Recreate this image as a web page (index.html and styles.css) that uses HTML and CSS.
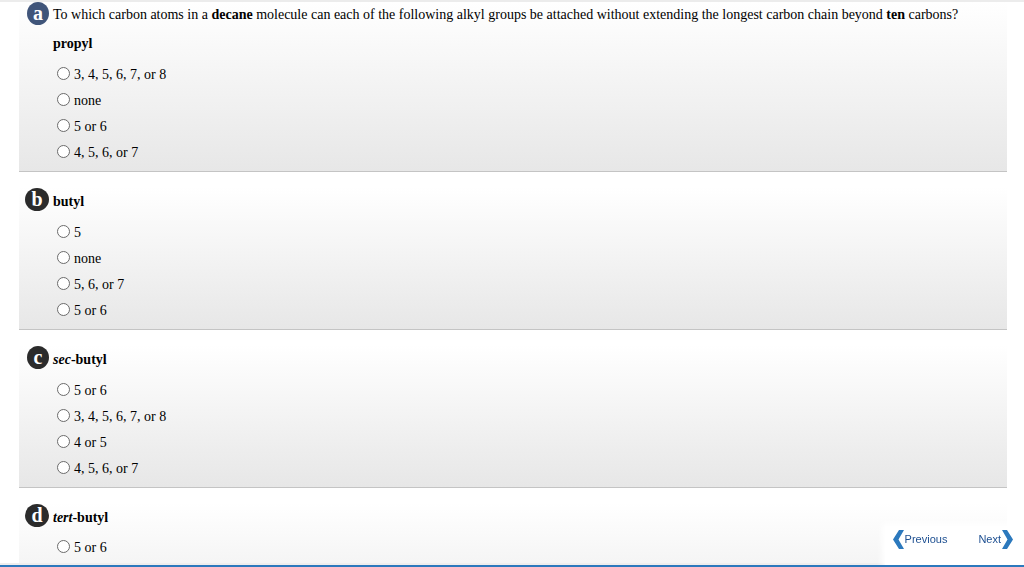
FILE: index.html
```html
<!DOCTYPE html>
<html lang="en">
<head>
<meta charset="utf-8">
<title>Alkyl groups on decane</title>
<link rel="stylesheet" href="styles.css">
</head>
<body>
<main class="questions">
  <section class="part">
    <span class="badge badge-current">a</span>
    <div class="content">
      <p class="prompt">To which carbon atoms in a <b>decane</b> molecule can each of the following alkyl groups be attached without extending the longest carbon chain beyond <b>ten</b> carbons?</p>
      <h2 class="group">propyl</h2>
      <div class="options">
        <label class="option"><input class="radio" type="radio" name="a">3, 4, 5, 6, 7, or 8</label>
        <label class="option"><input class="radio" type="radio" name="a">none</label>
        <label class="option"><input class="radio" type="radio" name="a">5 or 6</label>
        <label class="option"><input class="radio" type="radio" name="a">4, 5, 6, or 7</label>
      </div>
    </div>
  </section>
  <section class="part">
    <span class="badge">b</span>
    <div class="content">
      <h2 class="group">butyl</h2>
      <div class="options">
        <label class="option"><input class="radio" type="radio" name="b">5</label>
        <label class="option"><input class="radio" type="radio" name="b">none</label>
        <label class="option"><input class="radio" type="radio" name="b">5, 6, or 7</label>
        <label class="option"><input class="radio" type="radio" name="b">5 or 6</label>
      </div>
    </div>
  </section>
  <section class="part">
    <span class="badge badge-narrow">c</span>
    <div class="content">
      <h2 class="group"><i>sec</i>-butyl</h2>
      <div class="options">
        <label class="option"><input class="radio" type="radio" name="c">5 or 6</label>
        <label class="option"><input class="radio" type="radio" name="c">3, 4, 5, 6, 7, or 8</label>
        <label class="option"><input class="radio" type="radio" name="c">4 or 5</label>
        <label class="option"><input class="radio" type="radio" name="c">4, 5, 6, or 7</label>
      </div>
    </div>
  </section>
  <section class="part part-last">
    <span class="badge">d</span>
    <div class="content">
      <h2 class="group"><i>tert</i>-butyl</h2>
      <div class="options">
        <label class="option"><input class="radio" type="radio" name="d">5 or 6</label>
      </div>
    </div>
  </section>
</main>
<footer class="footer">
  <nav class="pager">
    <a class="pager-link" href="#previous"><svg class="chevron" viewBox="0 0 11 19"><path d="M6 0h5L5.500 9.500 11 19H6L0 9.500z"/></svg>Previous</a>
    <a class="pager-link" href="#next">Next<svg class="chevron" viewBox="0 0 11 19"><path d="M5 0H0l5.500 9.500L0 19h5l6-9.500z"/></svg></a>
  </nav>
</footer>
</body>
</html>
```
FILE: styles.css
```css
* {
  box-sizing: border-box;
}

body {
  display: flex;
  flex-direction: column;
  margin: 0;
  min-height: 100vh;
  border-top: 2px solid #ececec;
  border-bottom: 4px solid #eee;
  background: #fff;
  color: #000;
  font: 14px/16px "Liberation Serif", "Times New Roman", serif;
}

.questions {
  display: flex;
  flex: 1;
  flex-direction: column;
  gap: 15px;
  padding: 0 17px 0 19px;
}

.part {
  display: flex;
  align-items: flex-start;
  gap: 4px;
  padding: 0 4px 5px 6px;
  border-bottom: 1px solid #c4c4c4;
  background: linear-gradient(#fff, #e7e7e7);
}

.part-last {
  flex: 1;
  padding-bottom: 0;
  border-bottom: 0;
  background: linear-gradient(#fff, #f5f5f5);
}

.badge {
  flex: none;
  width: 24px;
  height: 23px;
  margin-top: 1px;
  border-radius: 50%;
  background: #2b2b2b;
  color: #fff;
  font-size: 20px;
  font-weight: bold;
  line-height: 22px;
  text-align: center;
}

.badge-current,
.badge-narrow {
  width: 22px;
  margin-left: 2px;
}

.badge-current {
  margin-top: 0;
  background: #40557a;
}

.content {
  flex: 1;
}

.prompt {
  margin: 0;
  padding: 5px 0;
}

.group {
  margin: 0;
  padding: 7px 0 5px;
  font-size: 14px;
  line-height: 16px;
}

.prompt + .group {
  padding-top: 8px;
}

.options {
  display: flex;
  flex-direction: column;
  padding: 5px 0 0 4px;
}

.part-last .options {
  padding-top: 4px;
}

.option {
  display: flex;
  align-items: center;
  gap: 4px;
  height: 26px;
}

.radio {
  appearance: none;
  width: 13px;
  height: 13px;
  margin: 0 0 3px;
  border: 1px solid #6b6b6b;
  border-radius: 50%;
  background: #fff;
}

.radio:checked {
  border-width: 4px;
}

.footer {
  position: fixed;
  right: 0;
  bottom: 0;
  left: 0;
  display: flex;
  justify-content: flex-end;
  border-bottom: 2px solid #2c79bd;
}

.pager {
  display: flex;
  gap: 31px;
  padding: 4px 11px 16px 8px;
  background: #fff;
  box-shadow: 0 0 6px 3px #fff;
  clip-path: inset(-9px -9px 0 -9px);
}

.pager-link {
  display: flex;
  align-items: center;
  gap: 1px;
  color: #1d4f91;
  font: 11px/19px "Liberation Sans", Arial, sans-serif;
  text-decoration: none;
}

.chevron {
  width: 11px;
  height: 19px;
  fill: #2c79bd;
}
```
